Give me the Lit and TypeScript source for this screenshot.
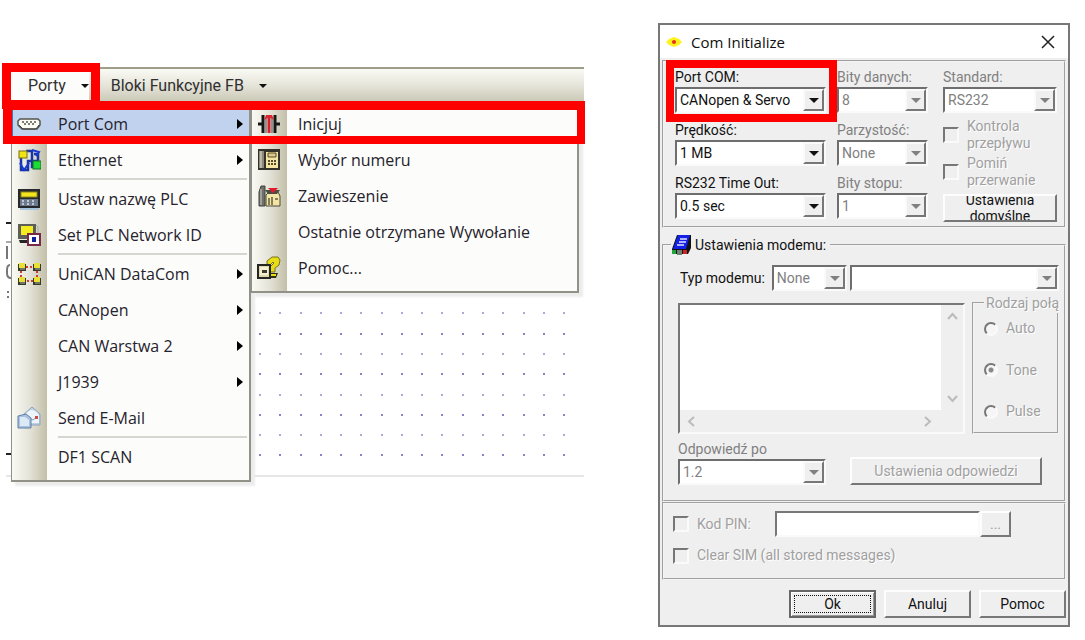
import { LitElement, html, css, svg, nothing } from "lit";
import { customElement } from "lit/decorators.js";

const icons: Record<string, unknown> = {
  com: svg`<path d="M3 7h18l2 2v4l-3 4H5l-4-4V9z" fill="#fbfbf4" stroke="#55554c" stroke-width="1.5"/><path d="M5 10h2m2 0h2m2 0h2m2 0h2M7 12h2m2 0h2m2 0h2" stroke="#55554c" stroke-width="1.500" fill="none"/><path d="M2 13l4 4h13l3-4" stroke="#444" fill="none"/>`,
  ethernet: svg`<path d="M9 3h6v16h6V6h-4M4 10v12h7v-9h10" fill="none" stroke="#1734a6" stroke-width="2.500"/><path d="M15 2l7 2-3 4M3 15l4 7 5-7" fill="none" stroke="#173ad0" stroke-width="2"/><rect x="2" y="3" width="8" height="7" fill="#f2e413" stroke="#766f16"/><rect x="16" y="13" width="8" height="8" fill="#1ddb35" stroke="#126e27"/>`,
  plc: svg`<rect x="1" y="2" width="22" height="19" fill="#26282c"/><rect x="3" y="12" width="18" height="7" fill="#6d7a8b"/><rect x="4" y="5" width="16" height="5" fill="#f5e51e" stroke="#8d8618"/><path d="M5 14h2m3 0h2m3 0h2M5 17h2m3 0h2m3 0h2" stroke="#dce5ef" stroke-width="1.500"/><path d="M3 22h19" stroke="#a6c4dc" stroke-width="2"/>`,
  network: svg`<rect x="1" y="1" width="18" height="15" fill="#5c5f57"/><rect x="4" y="3" width="12" height="9" fill="#f5ec20"/><path d="M2 17h8v3H3z" fill="#252525"/><path d="M19 2l2 2v8" stroke="#aaa" fill="none"/><rect x="11" y="11" width="12" height="11" fill="#fff" stroke="#782849" stroke-width="2"/><rect x="15" y="14" width="4" height="5" fill="#101e9c"/>`,
  unican: svg`<path d="M9 5h7M20 9v6M16 19H9M4 15V9" stroke="#cf3d32" stroke-width="2" stroke-dasharray="2 2"/>${[[1, 1], [16, 1], [1, 15], [16, 15]].map(([x, y]) => svg`<rect x=${x} y=${y + 1} width="8" height="7" fill="#353b2b"/><rect x=${x + 1} y=${y} width="6" height="5" fill="#e8df37"/><path d="M${x + 2} ${y + 6}h5" stroke="#b2b2a3"/>`)}`,
  mail: svg`<path d="M6 9 15 1l8 7v11H7z" fill="#bfd0e5" stroke="#8ca3bf"/><path d="M8 9c5-8 11-5 14 0v8H8z" fill="#edf4fb"/><path d="m12 12 4 2 5-4" fill="none" stroke="#829bbc"/><path d="M1 10l8-2 5 4v10H1z" fill="#a9c2df" stroke="#607ea4"/><path d="M3 11h5l4 3v6H3z" fill="#dce9f7"/><rect x="18" y="10" width="3" height="3" fill="#cf4c42"/>`,
  dial: svg`<path d="M1 12h4M19 12h4" stroke="#171717" stroke-width="3"/><path d="M6 3v18M18 3v18" stroke="#171717" stroke-width="3"/><path d="M9 6v15M15 6v15" stroke="#777" stroke-width="1.500"/><path d="M12 21V5" stroke="#d91f2b" stroke-width="3"/><path d="M7 8l2-5h6l2 5-5-3z" fill="#dc2530"/>`,
  phone: svg`<rect x="1" y="1" width="22" height="21" fill="#34332b"/><rect x="9" y="4" width="12" height="16" fill="#f4e5a2"/><rect x="2" y="3" width="5" height="17" fill="#8c897c"/><path d="M4 3v17" stroke="#e8e4cf"/><path d="M11 5h8v4h-8z" fill="#d9cb8c" stroke="#564b2a"/><path d="M11 13h2m1 0h2m1 0h2m-8 3h2m1 0h2m1 0h2" stroke="#564b2a" fill="none" stroke-width="2"/>`,
  hang: svg`<path d="M2 22V8l2-6h4v20z" fill="#6f706b" stroke="#41423e"/><path d="M4 5v16" stroke="#d1d0c5"/><path d="M9 11l3-3h9l2 4v10H9z" fill="#f2e5a5" stroke="#4b4838"/><path d="M8 6h15l-3 4h-9z" fill="#4d4c42"/><path d="M11 4h10l-5 5z" fill="#e3192c"/><path d="M12 14v7M15 13v8M18 15h3" stroke="#625c3c" stroke-width="1.500"/>`,
  help: svg`<path d="M10 8V5l5-4h6l2 3-1 5-4 3v4h-5v-5l4-4-1-1-3 3z" fill="#e7dc16" stroke="#77731d"/><path d="M13 17h8l-2 5h-7z" fill="#332f14"/><path d="M14 18h5v2h-5z" fill="#e7dc16"/><rect x="1" y="9" width="12" height="13" fill="#ddd8ae" stroke="#252521" stroke-width="2"/><path d="M3 11h8v8H3z" fill="#f4f0d1"/><path d="M5 14h5v3H5z" fill="#3c3b31"/>`,
};

const icon = (name?: string) =>
  name ? html`<svg class="icon" viewBox="0 0 24 24" aria-hidden="true">${icons[name]}</svg>` : html`<span></span>`;

interface Entry {
  label?: string;
  icon?: string;
  more?: boolean;
  selected?: boolean;
}

const portMenu: Entry[] = [
  { label: "Port Com", icon: "com", more: true, selected: true },
  { label: "Ethernet", icon: "ethernet", more: true },
  {},
  { label: "Ustaw nazwę PLC", icon: "plc" },
  { label: "Set PLC Network ID", icon: "network" },
  {},
  { label: "UniCAN DataCom", icon: "unican", more: true },
  { label: "CANopen", more: true },
  { label: "CAN Warstwa 2", more: true },
  { label: "J1939", more: true },
  { label: "Send E-Mail", icon: "mail" },
  {},
  { label: "DF1 SCAN" },
];

const comMenu: Entry[] = [
  { label: "Inicjuj", icon: "dial" },
  { label: "Wybór numeru", icon: "phone" },
  { label: "Zawieszenie", icon: "hang" },
  { label: "Ostatnie otrzymane Wywołanie" },
  { label: "Pomoc...", icon: "help" },
];

@customElement("ladder-editor")
class LadderEditor extends LitElement {
  static styles = css`
    :host {
      display: block;
      position: relative;
      font-family: "Open Sans", "Noto Sans", sans-serif;
      color: #26222c;
    }
    .toolbar {
      display: flex;
      height: 34px;
      box-sizing: border-box;
      border-top: 2px solid #9f9e8b;
      background: linear-gradient(#fafaf5, #e6e5da 50%, #cbc9b7);
    }
    .tool {
      display: flex;
      align-items: center;
      gap: 15px;
      padding: 2px 10px 0 22px;
      border: 0;
      background: none;
      font: 16px/20px Roboto, sans-serif;
      color: #303030;
    }
    .tool.open {
      background: #fcfcfa;
      padding-right: 0;
    }
    .caret {
      border: 4px solid transparent;
      border-top-color: #111;
      border-bottom: 0;
    }
    .canvas {
      display: block;
      width: 100%;
      height: 376px;
    }
    .menus {
      position: absolute;
      top: 34px;
      left: 5px;
      display: flex;
      align-items: flex-start;
    }
    .menu {
      box-sizing: border-box;
      padding: 5px 0;
      border: solid #929187;
      border-width: 0 2px 2px 1px;
      background: linear-gradient(90deg, #fafaf5, #e4e3d8 50%, #c2bfa8) 0 0 / 35px 100% no-repeat #fcfcfa;
      box-shadow: 4px 4px 2px #ececec;
    }
    .main {
      width: 240px;
    }
    .sub {
      width: 328px;
    }
    .item {
      display: grid;
      grid-template-columns: 35px 1fr 12px;
      align-items: center;
      width: 100%;
      height: 36px;
      padding: 0;
      border: 0;
      background: none;
      font: 16px/20px "Open Sans", "Noto Sans", sans-serif;
      color: inherit;
      text-align: left;
    }
    .item.selected {
      background: #c1d2ee;
      box-shadow: inset 1px 0 #4a70b0;
    }
    .icon {
      width: 24px;
      height: 24px;
      margin-left: 5px;
    }
    .label {
      padding-left: 11px;
      white-space: nowrap;
    }
    .more {
      border: 5px solid transparent;
      border-left: 6px solid #000;
      border-right: 0;
      justify-self: start;
    }
    .separator {
      height: 2px;
      margin: 0 2px 1px 46px;
      border: 0;
      background: #d6d5d0;
    }
    .mark {
      position: absolute;
      box-sizing: border-box;
      border: 9px solid #f00;
      pointer-events: none;
    }
    .mark.tool-mark {
      top: -4px;
      left: -4px;
      width: 98px;
      height: 46px;
    }
    .mark.path-mark {
      top: 34px;
      left: -3px;
      right: -1px;
      height: 43px;
      border-width: 9px 8px 8px 9px;
    }
  `;

  private menu(entries: Entry[], kind: string) {
    return html`<div class="menu ${kind}" role="menu">
      ${entries.map((e) =>
        e.label
          ? html`<button class="item ${e.selected ? "selected" : ""}" role="menuitem">
              ${icon(e.icon)}<span class="label">${e.label}</span>${e.more ? html`<span class="more"></span>` : nothing}
            </button>`
          : html`<hr class="separator" />`
      )}
    </div>`;
  }

  render() {
    const dots = [];
    for (let row = 0; row < 9; row++)
      for (let col = 0; col < 16; col++)
        dots.push(svg`<rect x=${Math.round(253 + col * 20.27)} y=${Math.round(191 + row * 20.3)} width="2" height="2" fill=${row % 2 ? "#a9a9db" : "#8583c8"}/>`);
    return html`
      <div class="toolbar" role="toolbar">
        <button class="tool open">Porty <span class="caret"></span></button>
        <button class="tool">Bloki Funkcyjne FB <span class="caret"></span></button>
      </div>
      <svg class="canvas" aria-hidden="true">
        ${dots}
        <path d="M0 122h5M0 353h5" stroke="#222" stroke-width="2" />
        <path d="M0 141h5" stroke="#aaa" stroke-width="2" />
        <path d="M1 145v13M4 164q-3 0-3 5v3q0 5 4 5M1 191h2M1 196h2" stroke="#777" stroke-width="2" fill="none" />
        <rect y="374" width="100%" height="2" fill="#e6e6e6" />
      </svg>
      <div class="menus">${this.menu(portMenu, "main")}${this.menu(comMenu, "sub")}</div>
      <div class="mark tool-mark"></div>
      <div class="mark path-mark"></div>
    `;
  }
}

@customElement("com-dialog")
class ComDialog extends LitElement {
  static styles = css`
    :host {
      display: block;
      box-sizing: border-box;
      border: 2px solid #777;
      background: #efefef;
      font: 14px/20px Roboto, sans-serif;
      color: #111;
    }
    * {
      box-sizing: border-box;
    }
    button,
    select,
    input,
    textarea {
      font: inherit;
      color: inherit;
      margin: 0;
      border-radius: 0;
    }
    .title {
      display: flex;
      align-items: center;
      gap: 9px;
      height: 33px;
      padding: 0 13px 0 6px;
      background: #fff;
      font: 15px/20px "Open Sans", "Noto Sans", sans-serif;
    }
    .sun {
      width: 16px;
      height: 16px;
    }
    .close {
      margin-left: auto;
      padding: 0;
      border: 0;
      background: none;
      display: flex;
    }
    .close svg {
      width: 14px;
      height: 14px;
    }
    .body {
      padding: 2px;
    }
    .group {
      margin: 0;
      min-width: 0;
      border: 2px groove #f4f4f4;
    }
    .port {
      position: relative;
      display: grid;
      grid-template-columns: 151fr 91fr 118fr;
      gap: 11px;
      padding: 5px 7px 4px 11px;
    }
    .column {
      display: flex;
      flex-direction: column;
      gap: 7px;
      min-width: 0;
    }
    .column.last {
      padding-left: 4px;
      gap: 5px;
    }
    .field {
      display: grid;
      white-space: nowrap;
    }
    .off {
      color: #808080;
    }
    .faint {
      color: #a0a0a0;
      text-shadow: 1px 1px #fff;
    }
    .combo {
      display: grid;
      min-width: 0;
    }
    .combo select,
    .drop {
      grid-area: 1 / 1;
    }
    .combo select {
      appearance: none;
      width: 100%;
      height: 26px;
      padding: 0 24px 0 3px;
      border: 2px solid #6e6e6e;
      border-right-color: #fafafa;
      border-bottom-color: #fafafa;
      background: #fff;
      opacity: 1;
    }
    .drop {
      justify-self: end;
      display: grid;
      place-items: center;
      width: 21px;
      height: 22px;
      margin: 2px 2px 0 0;
      border: 2px solid #fafafa;
      border-right-color: #777;
      border-bottom-color: #777;
      background: #efefef;
      pointer-events: none;
    }
    .drop::after {
      content: "";
      border: 5px solid transparent;
      border-top-color: currentColor;
      border-bottom: 0;
    }
    .checks {
      display: grid;
      gap: 3px;
    }
    .check {
      display: flex;
      align-items: center;
      gap: 8px;
      line-height: 17px;
    }
    .box {
      appearance: none;
      flex: none;
      width: 16px;
      height: 16px;
      border: 2px solid #777;
      border-right-color: #fafafa;
      border-bottom-color: #fafafa;
      background: #efefef;
    }
    .push {
      height: 28px;
      padding: 0;
      border: 2px solid #fdfdfd;
      border-right-color: #777;
      border-bottom-color: #777;
      background: #efefef;
    }
    .push.crowded {
      display: grid;
      align-content: center;
      overflow: hidden;
      line-height: 16px;
    }
    .mark {
      position: absolute;
      top: -2px;
      left: 2px;
      width: 171px;
      height: 62px;
      border: 8px solid #f00;
      pointer-events: none;
    }
    .modem {
      margin-top: 6px;
      padding: 9px 5px 15px 14px;
    }
    .modem > legend {
      display: flex;
      align-items: center;
      gap: 3px;
      height: 22px;
      margin-left: -7px;
      padding: 0 4px 0 0;
    }
    .book {
      width: 21px;
      height: 22px;
    }
    .type {
      display: grid;
      grid-template-columns: auto 76fr 211fr;
      align-items: center;
      gap: 3px;
      padding-left: 2px;
    }
    .type label {
      padding-right: 4px;
    }
    .log {
      display: grid;
      grid-template-columns: 287fr 87fr;
      align-items: start;
      gap: 7px;
      margin-top: 12px;
    }
    .scroller {
      display: grid;
      grid-template: 1fr 22px / 1fr 22px;
      height: 131px;
      border: 2px solid #777;
      border-right-color: #fafafa;
      border-bottom-color: #fafafa;
    }
    .scroller textarea {
      resize: none;
      border: 0;
      padding: 2px;
      background: #fff;
      width: 100%;
      height: 100%;
    }
    .bar {
      display: flex;
      justify-content: space-between;
      padding: 0 8px 0 6px;
      align-items: center;
    }
    .bar.vertical {
      flex-direction: column;
      padding: 6px 0;
    }
    .bar svg {
      width: 11px;
      height: 11px;
      fill: none;
      stroke: #bbb;
      stroke-width: 2;
    }
    .tones {
      display: flex;
      flex-direction: column;
      justify-content: space-between;
      height: 141px;
      margin-top: -10px;
      padding: 7px 0 12px 10px;
    }
    .tones legend {
      width: 80px;
      padding: 0 2px;
      white-space: nowrap;
    }
    .radio {
      appearance: none;
      flex: none;
      width: 14px;
      height: 14px;
      border: 2px solid #777;
      border-right-color: #fafafa;
      border-bottom-color: #fafafa;
      border-radius: 50%;
      background: #f6f6f6;
    }
    .radio:checked {
      background: radial-gradient(circle, #888 0 2px, #f6f6f6 3px);
    }
    .reply {
      display: grid;
      grid-template-columns: 148fr 192fr;
      align-items: end;
      gap: 24px;
      margin: 5px 17px 0 0;
    }
    .sim {
      padding: 7px 53px 14px 9px;
      display: grid;
      gap: 10px;
    }
    .pin {
      display: flex;
      align-items: center;
    }
    .pin .check {
      width: 102px;
    }
    .pin input[type="text"] {
      flex: 1;
      min-width: 0;
      height: 26px;
      border: 2px solid #777;
      border-right-color: #fafafa;
      border-bottom-color: #fafafa;
      background: #fff;
    }
    .dots {
      width: 31px;
      height: 26px;
    }
    .footer {
      display: flex;
      justify-content: flex-end;
      gap: 8px;
      padding: 10px 0 5px;
    }
    .footer .push {
      width: 87px;
    }
    .footer .default {
      padding: 1px;
      border-color: #666;
      box-shadow: inset 1px 1px #fff, inset -1px -1px #999;
    }
    .focus {
      display: block;
      margin: 0 2px;
      border: 1px dotted #111;
      line-height: 16px;
    }
  `;

  private combo(id: string, value: string, disabled = false) {
    return html`<span class="combo ${disabled ? "off" : ""}">
      <select id=${id} ?disabled=${disabled}><option>${value}</option></select>
      <span class="drop"></span>
    </span>`;
  }

  private field(id: string, label: string, value: string, disabled = false) {
    return html`<div class="field ${disabled ? "off" : ""}">
      <label for=${id}>${label}</label>${this.combo(id, value, disabled)}
    </div>`;
  }

  private chevron(d: string) {
    return html`<svg viewBox="0 0 11 11" aria-hidden="true"><path d=${d} /></svg>`;
  }

  render() {
    return html`
      <div class="title">
        <svg class="sun" viewBox="0 0 16 16" aria-hidden="true">
          <path d="M0 8l3-3 5-2 5 2 3 3-3 3-5 2-5-2z" fill="#fff21c" /><circle cx="8" cy="8" r="2" fill="#e6301c" />
        </svg>
        <span>Com Initialize</span>
        <button class="close" aria-label="Zamknij">
          <svg viewBox="0 0 14 14"><path d="M1 1l12 12M13 1L1 13" stroke="#222" stroke-width="1.500" /></svg>
        </button>
      </div>
      <div class="body">
        <div class="group port">
          <div class="column">
            ${this.field("port", "Port COM:", "CANopen & Servo")}
            ${this.field("speed", "Prędkość:", "1 MB")}
            ${this.field("timeout", "RS232 Time Out:", "0.5 sec")}
          </div>
          <div class="column">
            ${this.field("bits", "Bity danych:", "8", true)}
            ${this.field("parity", "Parzystość:", "None", true)}
            ${this.field("stop", "Bity stopu:", "1", true)}
          </div>
          <div class="column last">
            ${this.field("standard", "Standard:", "RS232", true)}
            <div class="checks faint">
              <label class="check"><input class="box" type="checkbox" disabled /><span>Kontrola<br />przepływu</span></label>
              <label class="check"><input class="box" type="checkbox" disabled /><span>Pomiń<br />przerwanie</span></label>
            </div>
            <button class="push crowded"><span>Ustawienia<br />domyślne</span></button>
          </div>
          <div class="mark"></div>
        </div>

        <fieldset class="group modem">
          <legend>
            <svg class="book" viewBox="0 0 21 22" aria-hidden="true">
              <path d="M6 1h14v13l-3 6H1v-5z" fill="#111" />
              <path d="M7 1h12l-4 14H2z" fill="#1420e6" />
              <path d="M9 5h7M8 8h7M6 11h7" stroke="#dfe5ff" stroke-width="1.500" />
              <path d="M1 16h4v4H1z" fill="#22a43c" /><path d="M6 16h5v5H6z" fill="#6d8272" /><path d="M12 16h4v4h-4z" fill="#cb2525" />
            </svg>
            Ustawienia modemu:
          </legend>
          <div class="type">
            <label for="modem">Typ modemu:</label>
            ${this.combo("modem", "None", true)}${this.combo("model", "", true)}
          </div>
          <div class="log">
            <div class="scroller">
              <textarea disabled aria-label="Modem"></textarea>
              <div class="bar vertical">${this.chevron("M1 8l4.500-5L10 8")}${this.chevron("M1 3l4.500 5L10 3")}</div>
              <div class="bar">${this.chevron("M8 1L3 5.500 8 10")}${this.chevron("M3 1l5 4.500L3 10")}</div>
            </div>
            <fieldset class="group tones faint">
              <legend>Rodzaj połą</legend>
              <label class="check"><input class="radio" type="radio" name="tone" disabled />Auto</label>
              <label class="check"><input class="radio" type="radio" name="tone" disabled checked />Tone</label>
              <label class="check"><input class="radio" type="radio" name="tone" disabled />Pulse</label>
            </fieldset>
          </div>
          <div class="reply">
            ${this.field("reply", "Odpowiedź po", "1.2", true)}
            <button class="push faint" disabled>Ustawienia odpowiedzi</button>
          </div>
        </fieldset>

        <div class="group sim faint">
          <div class="pin">
            <label class="check"><input class="box" type="checkbox" disabled />Kod PIN:</label>
            <input type="text" disabled aria-label="Kod PIN" />
            <button class="push dots" disabled>...</button>
          </div>
          <label class="check"><input class="box" type="checkbox" disabled />Clear SIM (all stored messages)</label>
        </div>

        <div class="footer">
          <button class="push default"><span class="focus">Ok</span></button>
          <button class="push">Anuluj</button>
          <button class="push">Pomoc</button>
        </div>
      </div>
    `;
  }
}

@customElement("app-root")
class AppRoot extends LitElement {
  static styles = css`
    :host {
      display: flex;
      align-items: flex-start;
      gap: 74px;
      min-height: 100vh;
      box-sizing: border-box;
      padding: 23px 15px 0 6px;
      background: #fff;
    }
    .editor {
      flex: 578 1 0;
      min-width: 0;
      margin-top: 44px;
    }
    .dialog {
      flex: 408 1 0;
      min-width: 0;
    }
  `;

  render() {
    return html`<ladder-editor class="editor"></ladder-editor><com-dialog class="dialog"></com-dialog>`;
  }
}
